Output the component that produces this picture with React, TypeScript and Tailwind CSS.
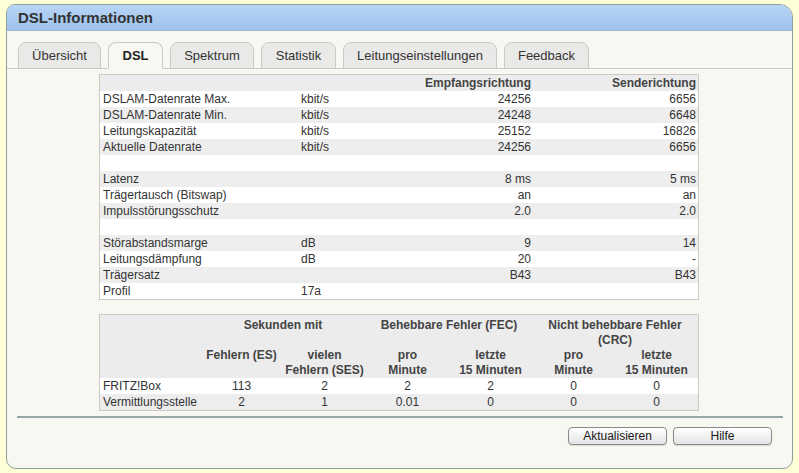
import React from "react";

const rows1: { l: string; u: string; e: string; s: string }[] = [
  { l: "DSLAM-Datenrate Max.", u: "kbit/s", e: "24256", s: "6656" },
  { l: "DSLAM-Datenrate Min.", u: "kbit/s", e: "24248", s: "6648" },
  { l: "Leitungskapazität", u: "kbit/s", e: "25152", s: "16826" },
  { l: "Aktuelle Datenrate", u: "kbit/s", e: "24256", s: "6656" },
  { l: "", u: "", e: "", s: "" },
  { l: "Latenz", u: "", e: "8 ms", s: "5 ms" },
  { l: "Trägertausch (Bitswap)", u: "", e: "an", s: "an" },
  { l: "Impulsstörungsschutz", u: "", e: "2.0", s: "2.0" },
  { l: "", u: "", e: "", s: "" },
  { l: "Störabstandsmarge", u: "dB", e: "9", s: "14" },
  { l: "Leitungsdämpfung", u: "dB", e: "20", s: "-" },
  { l: "Trägersatz", u: "", e: "B43", s: "B43" },
  { l: "Profil", u: "17a", e: "", s: "" },
];

const tabs = [
  { t: "Übersicht", w: "w-[83px]" },
  { t: "DSL", w: "w-[55px]", active: true },
  { t: "Spektrum", w: "w-[84px]" },
  { t: "Statistik", w: "w-[75px]" },
  { t: "Leitungseinstellungen", w: "w-[154px]" },
  { t: "Feedback", w: "w-[85px]" },
];

const errRows = [
  { l: "FRITZ!Box", v: ["113", "2", "2", "2", "0", "0"], bg: "bg-white" },
  { l: "Vermittlungsstelle", v: ["2", "1", "0.01", "0", "0", "0"], bg: "bg-[#ededed]" },
];

export default function App() {
  return (
    <div className="w-[799px] h-[473px] bg-[#feffd6] pt-[4px] pl-[6px] font-['Liberation_Sans',Arial,sans-serif] text-[#333]">
      <div className="w-[787px] h-[465px] border border-[#8da09c] rounded-tl-[9px] rounded-tr-[13px] rounded-b-[10px] bg-[#f8f7f2] overflow-hidden flex flex-col">
        {/* header */}
        <div className="h-[26px] shrink-0 bg-gradient-to-b from-[#b8d5f5] to-[#9dc2ec] border-b border-[#a9bccc] flex items-center pl-[11px]">
          <span className="text-[15px] font-bold text-[#333] leading-none">DSL-Informationen</span>
        </div>
        {/* body */}
        <div className="flex flex-col pt-[11px]">
          <div className="flex gap-[7px] pl-[11px] h-[27px] border-b border-[#c9c9c6]">
            {tabs.map((t) => (
              <div
                key={t.t}
                className={`${t.w} h-[27px] flex items-center justify-center rounded-t-[8px] border border-[#c9c9c6] text-[13px] ${
                  t.active
                    ? "bg-[#f8f7f2] border-b-[#f8f7f2] font-bold text-[#222]"
                    : "bg-[#e9e9e7] text-[#333]"
                }`}
              >
                {t.t}
              </div>
            ))}
          </div>

          {/* table 1 */}
          <div className="mt-[5px] ml-[92px] w-[600px] border border-[#c9c9c5] text-[12px] leading-[16px] bg-white">
            <div className="flex h-[16px] bg-[#ececec] font-bold text-[#444]">
              <div className="w-[199px]" />
              <div className="w-[100px]" />
              <div className="w-[134px] text-right pr-[2px]">Empfangsrichtung</div>
              <div className="w-[165px] text-right pr-[2px]">Senderichtung</div>
            </div>
            {rows1.map((r, i) => (
              <div key={i} className={`flex h-[16px] ${i % 2 === 1 ? "bg-[#eeeeee]" : "bg-white"}`}>
                <div className="w-[199px] pl-[3px] whitespace-nowrap">{r.l}</div>
                <div className="w-[100px] pl-[2px]">{r.u}</div>
                <div className="w-[134px] text-right pr-[2px]">{r.e}</div>
                <div className="w-[165px] text-right pr-[2px]">{r.s}</div>
              </div>
            ))}
          </div>

          {/* table 2 */}
          <div className="mt-[14px] ml-[92px] w-[600px] border border-[#c9c9c5] text-[12px] bg-white">
            <div className="grid grid-cols-[100px_repeat(6,83px)] bg-[#ececec] font-bold text-[#444] leading-[15px] text-center">
              <div className="h-[31px]" />
              <div className="col-span-2 pt-[3px]">Sekunden mit</div>
              <div className="col-span-2 pt-[3px]">Behebbare Fehler (FEC)</div>
              <div className="col-span-2 pt-[3px]">
                Nicht behebbare Fehler
                <br />
                (CRC)
              </div>
              <div className="h-[30px]" />
              <div>Fehlern (ES)</div>
              <div>
                vielen
                <br />
                Fehlern (SES)
              </div>
              <div>
                pro
                <br />
                Minute
              </div>
              <div>
                letzte
                <br />
                15 Minuten
              </div>
              <div>
                pro
                <br />
                Minute
              </div>
              <div>
                letzte
                <br />
                15 Minuten
              </div>
            </div>
            {errRows.map((r) => (
              <div key={r.l} className={`grid grid-cols-[100px_repeat(6,83px)] h-[16px] leading-[16px] ${r.bg}`}>
                <div className="pl-[3px] whitespace-nowrap">{r.l}</div>
                {r.v.map((v, j) => (
                  <div key={j} className="text-center">
                    {v}
                  </div>
                ))}
              </div>
            ))}
          </div>

          {/* separator */}
          <div className="mt-[5px] ml-[10px] w-[766px] h-[2px] bg-[#97a9a5]" />

          {/* buttons */}
          <div className="mt-[9px] flex justify-end gap-[6px] pr-[20px]">
            <button className="w-[99px] h-[18px] rounded-[4px] border border-[#8a8a8a] bg-gradient-to-b from-white to-[#e4e4e4] text-[12px] leading-[16px] text-[#1a1a1a] shadow-[0_1px_1px_rgba(0,0,0,0.12)]">
              Aktualisieren
            </button>
            <button className="w-[99px] h-[18px] rounded-[4px] border border-[#8a8a8a] bg-gradient-to-b from-white to-[#e4e4e4] text-[12px] leading-[16px] text-[#1a1a1a] shadow-[0_1px_1px_rgba(0,0,0,0.12)]">
              Hilfe
            </button>
          </div>
        </div>
      </div>
    </div>
  );
}
